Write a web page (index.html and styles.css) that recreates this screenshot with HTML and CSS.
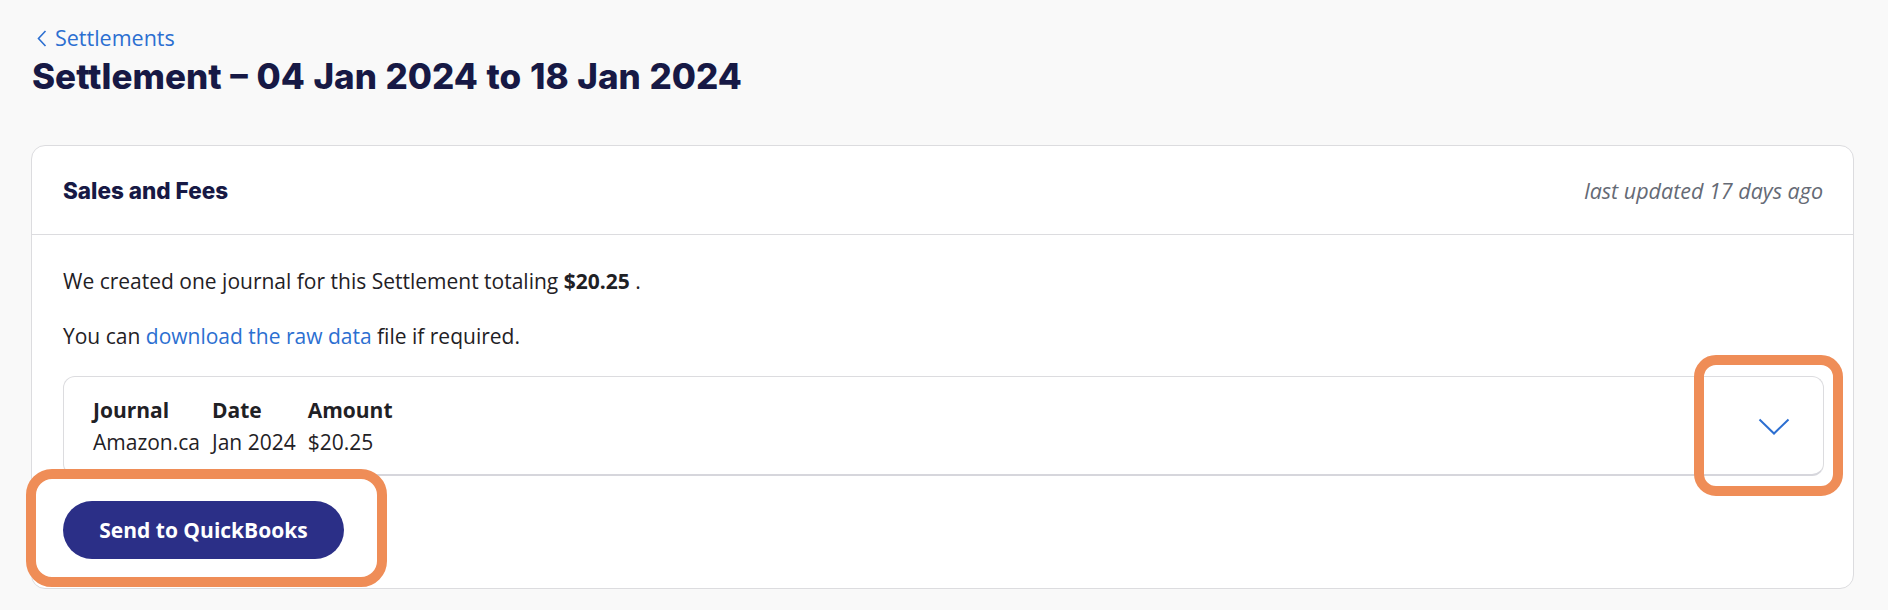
FILE: index.html
```html
<!DOCTYPE html>
<html lang="en">
<head>
<meta charset="utf-8">
<title>Settlement</title>
<link rel="stylesheet" href="styles.css">
</head>
<body>
<div class="page">
  <a class="back" href="#">
    <svg class="back-icon" width="10" height="17" viewBox="0 0 10 17"><polyline points="8.5,1 1.5,8.5 8.5,16" fill="none" stroke="#2c6fd1" stroke-width="1.6"/></svg>
    <span>Settlements</span>
  </a>
  <h1 class="title">Settlement – 04 Jan 2024 to 18 Jan 2024</h1>

  <section class="card">
    <header class="card-head">
      <h2 class="card-title">Sales and Fees</h2>
      <span class="updated">last updated 17 days ago</span>
    </header>
    <div class="card-body">
      <p class="para first">We created one journal for this Settlement totaling <strong>$20.25</strong> .</p>
      <p class="para second">You can <a class="link" href="#">download the raw data</a> file if required.</p>
      <div class="journal">
        <div class="jgrid">
          <div class="jh">Journal</div>
          <div class="jh">Date</div>
          <div class="jh">Amount</div>
          <div class="jv">Amazon.ca</div>
          <div class="jv">Jan 2024</div>
          <div class="jv">$20.25</div>
        </div>
        <div class="toggle">
          <svg width="32" height="17" viewBox="0 0 32 17"><polyline points="1.5,1.5 16,15.5 30.5,1.5" fill="none" stroke="#2c6fd1" stroke-width="2"/></svg>
        </div>
      </div>
      <button class="send">Send to QuickBooks</button>
    </div>
  </section>

  <div class="mark mark-toggle"></div>
  <div class="mark mark-send"></div>
</div>
</body>
</html>
```

FILE: styles.css
```css
html, body {
  margin: 0;
  padding: 0;
  background: #f9f9f9;
}
body {
  font-family: "Open Sans", "Noto Sans", sans-serif;
  color: #1f2125;
}
.page {
  position: relative;
  padding: 24px 34px 0 31px;
  min-height: 610px;
  box-sizing: border-box;
}
.back {
  display: flex;
  align-items: center;
  gap: 8px;
  height: 27px;
  padding-left: 6px;
  font-size: 21.5px;
  line-height: 27px;
  color: #2c6fd1;
  text-decoration: none;
}
.back-icon {
  display: block;
  margin-top: 1px;
}
.title {
  margin: 5px 0 0 1px;
  font-family: Inter, "Liberation Sans", sans-serif;
  font-weight: 800;
  font-size: 35px;
  line-height: 40px;
  word-spacing: 1px;
  color: #171945;
}
.card {
  margin-top: 49px;
  background: #fff;
  border: 1px solid #dcdcdf;
  border-radius: 14px;
}
.card-head {
  display: flex;
  align-items: center;
  justify-content: space-between;
  height: 88px;
  padding: 0 30px 0 31px;
  border-bottom: 1px solid #dcdcdf;
}
.card-title {
  margin: 0;
  font-family: Inter, "Liberation Sans", sans-serif;
  font-weight: 800;
  font-size: 22.5px;
  color: #171945;
}
.updated {
  font-style: italic;
  font-size: 21.5px;
  color: #656a75;
}
.card-body {
  padding: 0 29px 29px 31px;
}
.para {
  margin: 0 0 28px;
  font-size: 21px;
  line-height: 27px;
}
.para.first {
  padding-top: 33px;
}
.para.second {
  margin-bottom: 26px;
}
.para strong {
  font-weight: 700;
}
.link {
  color: #2c6fd1;
  text-decoration: none;
}
.journal {
  display: flex;
  align-items: center;
  justify-content: space-between;
  border: 1px solid #dcdcdf;
  border-bottom: 2px solid #d6d6dc;
  border-radius: 12px;
  padding: 17px 33px 16px 29px;
}
.jgrid {
  display: grid;
  grid-template-columns: auto auto auto;
  column-gap: 12px;
  font-size: 21px;
  line-height: 32px;
}
.jh {
  font-weight: 700;
}
.toggle {
  display: flex;
  align-items: center;
}
.toggle svg {
  display: block;
}
.send {
  display: block;
  margin-top: 25px;
  width: 281px;
  height: 58px;
  border: none;
  border-radius: 29px;
  background: #2b2f87;
  color: #fff;
  font-family: "Open Sans", "Noto Sans", sans-serif;
  font-weight: 700;
  font-size: 21px;
  cursor: pointer;
}
.mark {
  position: absolute;
  box-sizing: border-box;
  border: 10px solid #ef8d57;
}
.mark-toggle {
  left: 1694px;
  top: 355px;
  width: 149px;
  height: 141px;
  border-radius: 22px;
}
.mark-send {
  left: 26px;
  top: 469px;
  width: 361px;
  height: 118px;
  border-radius: 26px;
}
```
